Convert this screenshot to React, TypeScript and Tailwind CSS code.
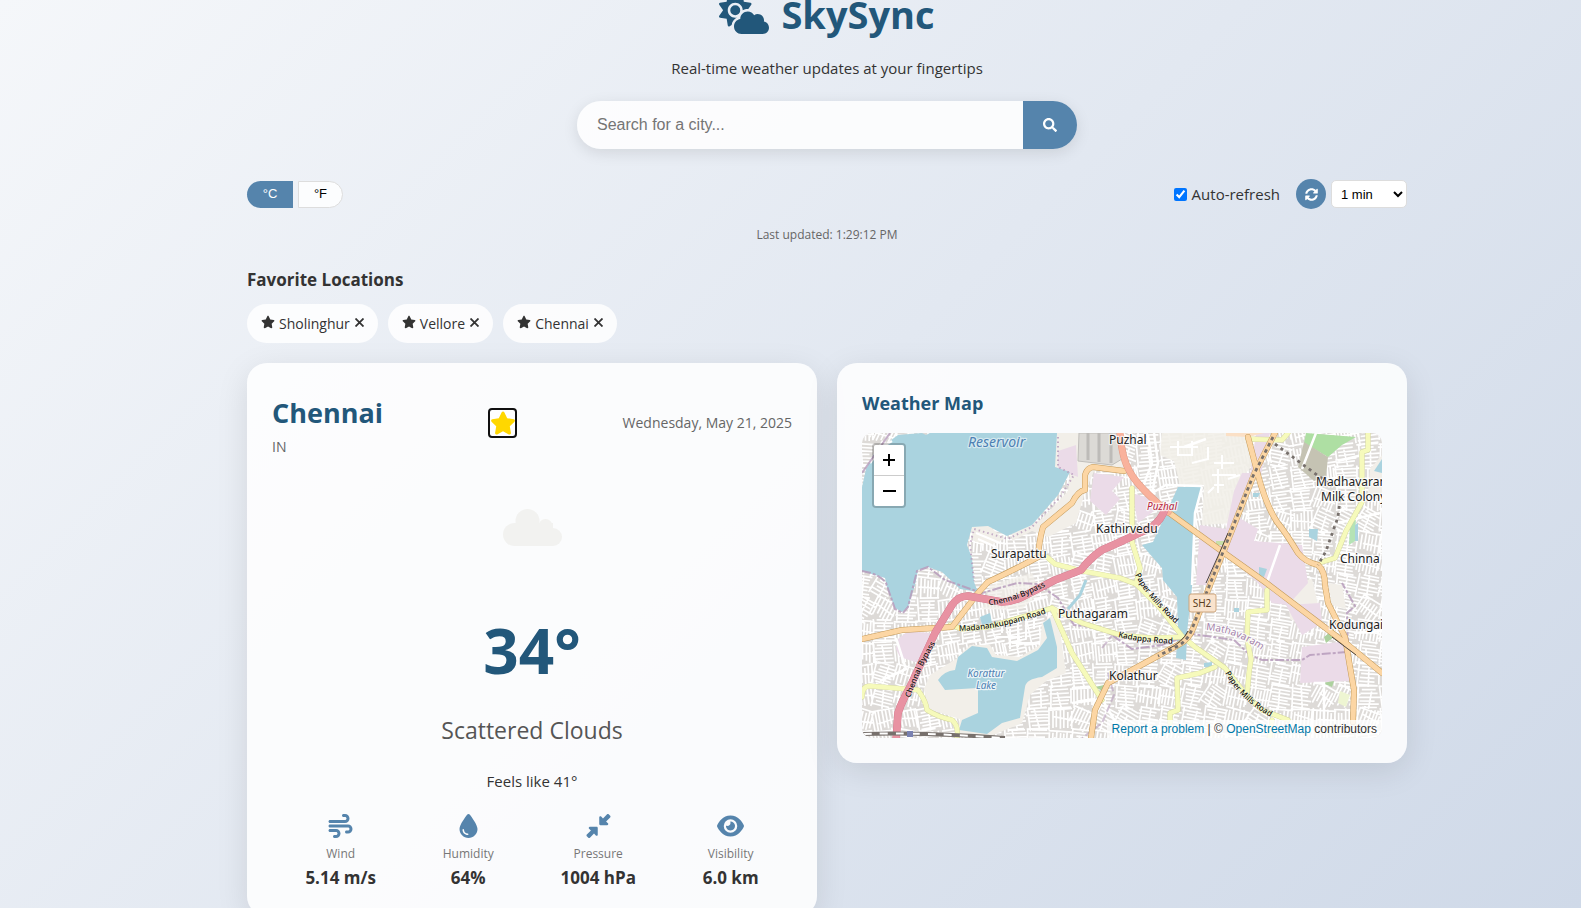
import React from "react";
import { FaSearch, FaSyncAlt } from "react-icons/fa";
import {
  FaCloudSun,
  FaDownLeftAndUpRightToCenter,
  FaDroplet,
  FaEye,
  FaStar,
  FaWind,
} from "react-icons/fa6";

const favorites = ["Sholinghur", "Vellore", "Chennai"];

const stats = [
  { label: "Wind", value: "5.14 m/s", Icon: FaWind },
  { label: "Humidity", value: "64%", Icon: FaDroplet },
  { label: "Pressure", value: "1004 hPa", Icon: FaDownLeftAndUpRightToCenter },
  { label: "Visibility", value: "6.0 km", Icon: FaEye },
];

/* Builds the dense web of residential streets as one path. */
function buildStreets(width: number, height: number) {
  let seed = 7;
  const rnd = () => {
    seed = (seed * 16807) % 2147483647;
    return seed / 2147483647;
  };
  const cell = 22;
  let d = "";
  for (let cy = 0; cy < height + cell; cy += cell) {
    for (let cx = 0; cx < width + cell; cx += cell) {
      const angle = Math.sin(cx / 90 + cy / 70) * 0.2 + (rnd() > 0.9 ? 0.4 : 0);
      const c = Math.cos(angle);
      const s = Math.sin(angle);
      const vertical = rnd() > 0.55;
      const line = (u0: number, v0: number, u1: number, v1: number) => {
        const [a0, b0, a1, b1] = vertical ? [v0, u0, v1, u1] : [u0, v0, u1, v1];
        const x0 = cx + a0 * c - b0 * s;
        const y0 = cy + a0 * s + b0 * c;
        const x1 = cx + a1 * c - b1 * s;
        const y1 = cy + a1 * s + b1 * c;
        d += `M${x0.toFixed(1)} ${y0.toFixed(1)}L${x1.toFixed(1)} ${y1.toFixed(1)}`;
      };
      for (let v = -11; v < 12; v += 2.9 + rnd() * 1.2) {
        line(-12 + rnd() * 6, v, 12 - rnd() * 6, v);
      }
      line(-11 + rnd() * 3, -12, -11 + rnd() * 3, 12);
      line(rnd() * 8 - 4, -12 + rnd() * 8, rnd() * 2, 12);
    }
  }
  return d;
}

const streets = buildStreets(520, 305);

const primary = [
  "M306 79L361 119L403 149L486 212L520 240",
  "M413 0L393 39L363 115L348 152L332 193Q328 206 316 212L270 237L246 250L233 277L229 305",
  "M386 4L396 42Q404 72 415 89Q424 100 436 120Q443 129 456 132Q463 138 463 152L466 170L483 204L488 234L492 257L491 289",
  "M262 38L231 34Q225 35 223 42L223 57Q216 58 210 70L181 94Q177 108 176 124Q150 138 126 149L116 160L90 194L40 197L0 206",
];

const secondary = [
  "M185 124L193 131L220 138L258 145L274 151L298 175L320 203L333 214L363 235L386 264L400 277L426 287",
  "M270 55L270 109L278 135L274 151",
  "M88 192L100 196L126 194L160 184L190 175L220 190L258 202L290 205L320 204",
  "M190 175L210 220L240 267",
  "M0 264Q0 253 8 253L56 257Q64 268 65 277Q76 284 90 287Q97 293 95 305",
  "M308 290L308 280L316 277L315 245L338 240L353 234",
  "M385 262L387 240L389 226L385 205L386 179L405 177L405 157",
  "M506 0L506 17L500 19L500 69L484 98L473 125L460 129",
  "M386 6L420 7L426 0",
  "M410 287L408 305",
];

const boundaries = [
  "M0 138Q18 141 24 150L33 176L41 180L46 174L55 138L66 134L83 147L120 160L155 150L176 151L196 165L212 192L240 195L270 216L300 212L330 201L372 207L388 222L400 227L440 227L448 222L486 219L485 180L493 173L480 150",
  "M28 0L14 20L0 40",
  "M240 215L252 200M246 240L252 262L240 290L220 305",
];

const trunk = "M258 0Q260 26 268 39Q276 54 306 79";

const bypass =
  "M34 308L36 280Q40 268 48 254L73 200L90 172Q96 163 106 163L140 169Q150 169 160 164L193 147L219 137Q228 125 240 117L258 109L290 94Q300 86 303 76";

function MapDrawing() {
  return (
    <svg
      viewBox="0 0 520 305"
      preserveAspectRatio="xMidYMid slice"
      className="block h-full w-full"
      role="img"
      aria-label="Street map around Puzhal and Kolathur"
    >
      <defs>
        <path id="bypass-east" d="M127 172Q150 171 188 151" />
        <path id="bypass-south" d="M48 265L60 234L78 202" />
        <path id="madanankuppam" d="M97 198Q140 197 188 179" />
        <path id="paper-north" d="M273 142Q284 164 316 193" />
        <path id="paper-south" d="M363 240Q378 268 414 287" />
        <path id="kadappa" d="M256 204Q280 210 316 211" />
        <path id="mathavaram" d="M344 197Q374 199 402 219" />
      </defs>
      <rect width="520" height="305" fill="#dddad7" />
      <path d={streets} stroke="#ffffff" strokeWidth="1.7" fill="none" />

      {/* open land */}
      <g fill="#f2efe9">
        <path d="M195 0L250 0L262 34L232 38L222 62L214 90L186 104L170 98L150 108L150 98L180 86L206 58L208 40L190 34Z" />
        <path d="M300 0L384 0L392 30L376 50L372 90L340 92L342 52L318 52L312 28L298 22Z" opacity="0.9" />
        <path d="M108 93L126 92L142 106L128 112L112 108Z" />
        <path d="M68 242L94 226L108 212L128 212L134 222L158 224L178 212L180 190L196 178L200 212L204 240L184 248L168 262L160 290L126 304L94 304L98 286L66 276L62 256Z" />
        <path d="M424 150L450 146L458 180L450 196L428 186Z" />
        <path d="M466 150L480 152L484 176L470 172Z" />
        <path d="M508 36L520 22L520 66L506 60Z" />
        <path d="M128 152L170 140L178 160L160 176L120 176Z" opacity="0.7" />
      </g>

      {/* sparse lanes crossing the open land */}
      <path
        d="M316 8V22H330V8M308 14H336M330 30L346 26V14M352 30H372M356 36V60M350 42H374M360 22V36M366 46L378 42M352 52H362M346 60L352 54M140 180V200M148 196V216M156 190V214M164 186V206M172 182V196M134 204H160M150 210H176M114 100L138 110M116 106L134 114"
        stroke="#ffffff"
        strokeWidth="2"
        fill="none"
      />

      {/* industrial areas */}
      <g fill="#ebdbe8">
        <path d="M196 18L214 12L216 44L196 36Z" />
        <path d="M232 40L262 44L250 58L258 66L244 82L228 68Z" />
        <path d="M394 0L408 0L398 46L388 42Z" />
        <path d="M380 40L394 40L376 84L396 96L392 108L440 112L446 150L426 172L396 150L362 120L350 152L334 152L338 92L364 96L372 58Z" />
        <path d="M36 206L46 198L68 200L64 216L56 230L38 224L34 216Z" />
        <path d="M440 214L484 208L488 248L438 250Z" />
        <path d="M396 150L430 150L426 172L410 170Z" />
        <path d="M270 60L290 66L292 78L276 90Z" />
        <path d="M424 172L458 170L460 190L440 202Z" />
        <path d="M316 212L326 206L322 226L314 222Z" />
      </g>

      {/* parks and special ground */}
      <path d="M444 0L494 4L480 12L466 24L442 10Z" fill="#aedfa3" />
      <path d="M442 9L466 24L464 44L452 48L436 34Z" fill="#c5c3b3" />
      <path d="M364 0L402 0L386 4L364 3Z" fill="#fbe0c6" />
      <path d="M217 0L260 0L260 26L250 32L216 28Z" fill="#dcdad6" stroke="#c0beba" />
      <path d="M226 0V27M237 0V29M249 0V30" stroke="#bdbbb8" strokeWidth="3" />
      <path d="M488 88L494 84L493 108L487 112Z" fill="#b5e3b5" />
      <path d="M462 204L472 196L472 204L464 210Z" fill="#add19e" />
      <path d="M354 108L362 108L362 112L354 112Z" fill="#c8dfa8" />
      <path d="M233 254L242 252L244 260Z" fill="#add19e" />
      <path d="M460 250L472 248L470 254Z" fill="#add19e" />
      <path d="M478 258L488 262L484 274L476 270Z" fill="#eef5d2" />

      {/* water */}
      <g fill="#aad3df">
        <path d="M0 54L4 36L13 19L36 2L60 0L64 2L68 0L195 0L193 34L208 39L196 62L170 92L145 103L126 93L110 94L105 112L110 125L112 149L116 159L98 156L80 139L66 134L56 137L53 152L46 174L40 179L33 175L25 154L23 145L0 138Z" />
        <path d="M76 247Q82 238 93 237L96 224L110 213L125 215L130 224L155 228L176 217L185 205L181 190L188 185L195 214V235L180 244Q164 246 163 254L158 285L140 290L125 301L97 297L100 287L116 280L116 255L83 257Z" />
        <path d="M316 54H340L333 79L330 154L325 200L324 227L314 225L316 197L315 164L301 147L300 135L280 112L291 109Z" />
        <path d="M118 184L128 180L130 190L120 192Z" />
        <path d="M447 96L456 96L455 108L447 104Z" />
        <path d="M391 60L398 60L396 64L391 64Z" />
        <path d="M512 38L520 26V40Z" />
        <path d="M342 230L350 229L350 234L342 234Z" />
        <path d="M397 134L405 136L402 144L397 142Z" />
        <path d="M372 175L377 175L377 179L372 179Z" />
        <path d="M493 92L496 90L496 108L493 108Z" />
      </g>
      <path d="M224 147L218 162L206 176" stroke="#aad3df" strokeWidth="3" fill="none" />

      {/* light local roads */}
      <path
        d="M340 54L333 80L330 152M292 0L296 30L290 60L304 52L340 53M286 2L290 30L280 56M322 14L344 6M476 28L500 22M476 90L518 80M418 112L404 152M210 270L240 266L254 290M34 205L44 236L18 248M454 0L440 36M492 200L520 198M452 250L462 250L462 290M8 30L20 14L30 8"
        stroke="#ffffff"
        strokeWidth="2.5"
        fill="none"
      />

      {/* administrative boundaries */}
      <g fill="none" stroke="#b69bbb" strokeWidth="2">
        <path d={boundaries[0]} strokeDasharray="9 2 3 2" opacity="0.85" />
        <path d={boundaries[1]} opacity="0.8" />
        <path d={boundaries[2]} strokeDasharray="8 3" opacity="0.6" />
        <path
          d="M196 4L196 34L212 42L198 64L170 94L146 106L112 96L108 112L112 148"
          strokeDasharray="1.5 3"
          opacity="0.8"
        />
      </g>

      {/* road network */}
      <g fill="none" strokeLinejoin="round" strokeLinecap="round">
        {secondary.map((d) => (
          <path key={d} d={d} stroke="#d3d69c" strokeWidth="5.2" />
        ))}
        {secondary.map((d) => (
          <path key={d} d={d} stroke="#f6fabb" strokeWidth="4.4" />
        ))}
        {primary.map((d) => (
          <path key={d} d={d} stroke="#c39a5a" strokeWidth="6" />
        ))}
        {primary.map((d) => (
          <path key={d} d={d} stroke="#fcd6a4" strokeWidth="5" />
        ))}
        <path d={trunk} stroke="#e09a84" strokeWidth="7" />
        <path d={trunk} stroke="#f9b29c" strokeWidth="6" />
        <path d={bypass} stroke="#cf7389" strokeWidth="7.6" />
        <path d={bypass} stroke="#e892a2" strokeWidth="7" />
      </g>

      {/* railways */}
      <g fill="none" stroke="#77706c">
        <path
          d="M411 4L391 43L361 119L346 156L330 196Q326 208 314 214L296 223"
          strokeWidth="2.8"
          strokeDasharray="3.5 3.5"
        />
        <path d="M413 11L470 53" strokeWidth="2.8" strokeDasharray="3 4" />
        <path d="M478 66L476 84L464 118L456 132" strokeWidth="2.8" strokeDasharray="3 4" />
        <path d="M0 301Q60 299 143 305" strokeWidth="4" />
        <path d="M2 301Q60 299 141 305" stroke="#ffffff" strokeWidth="2" strokeDasharray="8 8" />
        <path
          d="M366 100L357 121L344 150M470 204L494 222M306 216Q320 210 326 198"
          stroke="#4c443c"
          strokeWidth="1"
        />
      </g>
      <rect x="45" y="298" width="6" height="6" fill="#7981b0" />

      {/* place names */}
      <g
        fontFamily="'Noto Sans', sans-serif"
        fontSize="12"
        fill="#222222"
        stroke="#ffffff"
        strokeOpacity="0.75"
        strokeWidth="2.4"
        strokeLinejoin="round"
        paintOrder="stroke"
      >
        <text x="106" y="14" fontSize="14" fontStyle="italic" fill="#4d80b3" strokeOpacity="0.5">
          Reservoir
        </text>
        <text x="247" y="11">Puzhal</text>
        <text x="234" y="100">Kathirvedu</text>
        <text x="129" y="125">Surapattu</text>
        <text x="285" y="77" fontSize="10" fontStyle="italic" fill="#b5243c">Puzhal</text>
        <text x="454" y="53">Madhavaram</text>
        <text x="459" y="68">Milk Colony</text>
        <text x="478" y="130">Chinna</text>
        <text x="196" y="185">Puthagaram</text>
        <text x="467" y="196">Kodungaiyur</text>
        <text x="247" y="247">Kolathur</text>
        <g fontSize="10" fontStyle="italic" fill="#4d80b3" textAnchor="middle">
          <text x="124" y="244">Korattur</text>
          <text x="124" y="256">Lake</text>
        </g>
        <g fontSize="8" fontWeight="500" fill="#111111" strokeOpacity="0.25" strokeWidth="1.5">
          <text><textPath href="#bypass-east">Chennai Bypass</textPath></text>
          <text><textPath href="#bypass-south">Chennai Bypass</textPath></text>
          <text><textPath href="#madanankuppam">Madanankuppam Road</textPath></text>
          <text><textPath href="#paper-north">Paper Mills Road</textPath></text>
          <text><textPath href="#paper-south">Paper Mills Road</textPath></text>
          <text><textPath href="#kadappa">Kadappa Road</textPath></text>
        </g>
        <text fontSize="10" fill="#a583ab"><textPath href="#mathavaram">Mathavaram</textPath></text>
      </g>
      <rect x="327" y="161" width="27" height="18" rx="2" fill="#f9e3cd" stroke="#cda57d" />
      <text
        x="340"
        y="174"
        fontFamily="'Noto Sans', sans-serif"
        fontSize="10"
        fill="#5a3d20"
        textAnchor="middle"
      >
        SH2
      </text>
    </svg>
  );
}

function CloudIcon() {
  return (
    <svg width="59" height="37" viewBox="0 0 59 37" fill="#f2f2f0" aria-hidden="true">
      <circle cx="24.5" cy="12" r="12" />
      <circle cx="11.5" cy="25.5" r="11.5" />
      <circle cx="42.5" cy="17" r="7" />
      <circle cx="50" cy="28" r="9" />
      <rect x="11" y="14" width="39" height="23" />
    </svg>
  );
}

export default function App() {
  return (
    <div className="h-screen overflow-hidden bg-[linear-gradient(135deg,#f5f7fa,#cfd9e8)] pl-[73px] font-['Open_Sans','Noto_Sans',sans-serif] text-[#333333]">
      <div className="mx-auto -mt-4 w-full max-w-[1200px] px-5">
        <header className="flex flex-col items-center">
          <h1 className="flex h-[60px] items-center gap-3 text-[38px] font-bold leading-[60px] text-[#22577a]">
            <FaCloudSun className="h-10 w-[50px]" />
            SkySync
          </h1>
          <p className="mt-3 text-[15px] leading-6">Real-time weather updates at your fingertips</p>
          <form
            className="mt-[21px] flex h-12 w-full max-w-[500px] overflow-hidden rounded-full shadow-[0_4px_15px_rgba(0,0,0,0.1)]"
            onSubmit={(e) => e.preventDefault()}
          >
            <input
              type="text"
              aria-label="Search for a city"
              placeholder="Search for a city..."
              className="min-w-0 flex-1 bg-white/85 px-5 font-['Liberation_Sans',sans-serif] text-base outline-none placeholder:text-[#757575]"
            />
            <button
              type="submit"
              aria-label="Search"
              className="flex w-[54px] items-center justify-center bg-[#5584ac] text-white"
            >
              <FaSearch className="size-[14px]" />
            </button>
          </form>
        </header>

        <div className="mt-[30px] flex h-[30px] items-center justify-between">
          <div className="flex gap-[5px] font-['Liberation_Sans',sans-serif] text-[13px]">
            <button type="button" className="h-[27px] w-[46px] rounded-l-full bg-[#5584ac] text-white">
              °C
            </button>
            <button
              type="button"
              className="h-[27px] w-[45px] rounded-r-full border border-[#dddddd] bg-white/85 text-black"
            >
              °F
            </button>
          </div>
          <div className="flex items-center">
            <label className="flex items-center gap-[5px] text-[15px] leading-6">
              <input type="checkbox" defaultChecked className="size-[13px] accent-[#0075ff]" />
              Auto-refresh
            </label>
            <button
              type="button"
              aria-label="Refresh now"
              className="ml-4 flex size-[30px] items-center justify-center rounded-full bg-[#5584ac] text-white"
            >
              <FaSyncAlt className="size-[13px]" />
            </button>
            <select
              aria-label="Refresh interval"
              className="ml-[5px] h-[28px] w-[76px] rounded-[5px] border border-[#dddddd] bg-white px-[5px] font-['Liberation_Sans',sans-serif] text-[13px] text-black"
            >
              <option>1 min</option>
              <option>5 min</option>
              <option>10 min</option>
            </select>
          </div>
        </div>

        <p className="mt-4 text-center text-xs leading-5 text-[#666666]">Last updated: 1:29:12 PM</p>

        <section>
          <h2 className="mt-5 text-[17px] font-bold leading-[30px]">Favorite Locations</h2>
          <ul className="mt-[9px] flex gap-[10px]">
            {favorites.map((name) => (
              <li key={name} className="flex h-[39px] items-center rounded-full bg-white/85 px-[14px]">
                <FaStar className="mb-[3px] size-[14px]" />
                <span className="ml-1 text-[14px] leading-5">{name}</span>
                <button type="button" aria-label={`Remove ${name}`} className="mb-[3px] ml-[5px] flex">
                  <svg width="9" height="9" viewBox="0 0 9 9" aria-hidden="true">
                    <path d="M0.5 0.5L8.5 8.5M8.5 0.5L0.5 8.5" stroke="currentColor" strokeWidth="1.8" />
                  </svg>
                </button>
              </li>
            ))}
          </ul>
        </section>

        <main className="mt-5 grid grid-cols-2 items-start gap-5">
          <section className="rounded-[20px] bg-white/85 p-[25px] shadow-[0_8px_32px_rgba(0,0,0,0.1)]">
            <div className="flex h-[70px] items-center justify-between">
              <div>
                <h2 className="text-[27px] font-bold leading-[48px] text-[#22577a]">Chennai</h2>
                <p className="text-[14px] leading-5 text-[#666666]">IN</p>
              </div>
              <button
                type="button"
                aria-label="Remove from favorites"
                className="flex h-[30px] w-[29px] items-center justify-center rounded-[4px] border-2 border-[#101010] bg-white text-[#ffd700]"
              >
                <FaStar className="size-[26px] shrink-0" />
              </button>
              <p className="text-[14px] leading-5 text-[#666666]">Wednesday, May 21, 2025</p>
            </div>
            <div className="flex flex-col items-center">
              <div className="mt-[19px] flex h-[100px] items-center justify-center">
                <CloudIcon />
              </div>
              <p className="mt-[25px] text-[62px] font-bold leading-[96px] text-[#22577a]">34°</p>
              <p className="mt-[14px] text-[23px] leading-9 text-[#555555]">Scattered Clouds</p>
              <p className="mt-[21px] text-[15px] leading-6">Feels like 41°</p>
            </div>
            <dl className="mt-[21px] flex justify-around">
              {stats.map(({ label, value, Icon }) => (
                <div key={label} className="flex flex-col items-center">
                  <Icon className="h-6 w-[27px] text-[#5584ac]" />
                  <dt className="mt-[6px] text-xs leading-5 text-[#777777]">{label}</dt>
                  <dd className="mt-px text-[17px] font-bold leading-[26px]">{value}</dd>
                </div>
              ))}
            </dl>
          </section>

          <section className="rounded-[20px] bg-white/85 p-[25px] shadow-[0_8px_32px_rgba(0,0,0,0.1)]">
            <h2 className="text-lg font-bold leading-[30px] text-[#22577a]">Weather Map</h2>
            <div className="relative mt-[15px] h-[305px] overflow-hidden rounded-[10px]">
              <MapDrawing />
              <div className="absolute left-[10px] top-[10px] flex flex-col overflow-hidden rounded-[4px] border-2 border-black/20 bg-clip-padding text-black">
                <button
                  type="button"
                  aria-label="Zoom in"
                  className="flex h-[31px] w-[30px] items-center justify-center border-b border-[#cccccc] bg-white"
                >
                  <svg width="12" height="12" viewBox="0 0 12 12" aria-hidden="true">
                    <path d="M6 0V12M0 6H12" stroke="currentColor" strokeWidth="2" />
                  </svg>
                </button>
                <button
                  type="button"
                  aria-label="Zoom out"
                  className="flex h-[30px] w-[30px] items-center justify-center bg-white"
                >
                  <svg width="13" height="12" viewBox="0 0 13 12" aria-hidden="true">
                    <path d="M0 6H13" stroke="currentColor" strokeWidth="2" />
                  </svg>
                </button>
              </div>
              <p className="absolute bottom-0 right-0 bg-white/80 px-[5px] font-['Liberation_Sans',sans-serif] text-xs leading-[18px] text-[#333333]">
                <a href="#report" className="text-[#0078a8]">Report a problem</a> | ©{" "}
                <a href="#osm" className="text-[#0078a8]">OpenStreetMap</a> contributors
              </p>
            </div>
          </section>
        </main>
      </div>
    </div>
  );
}
